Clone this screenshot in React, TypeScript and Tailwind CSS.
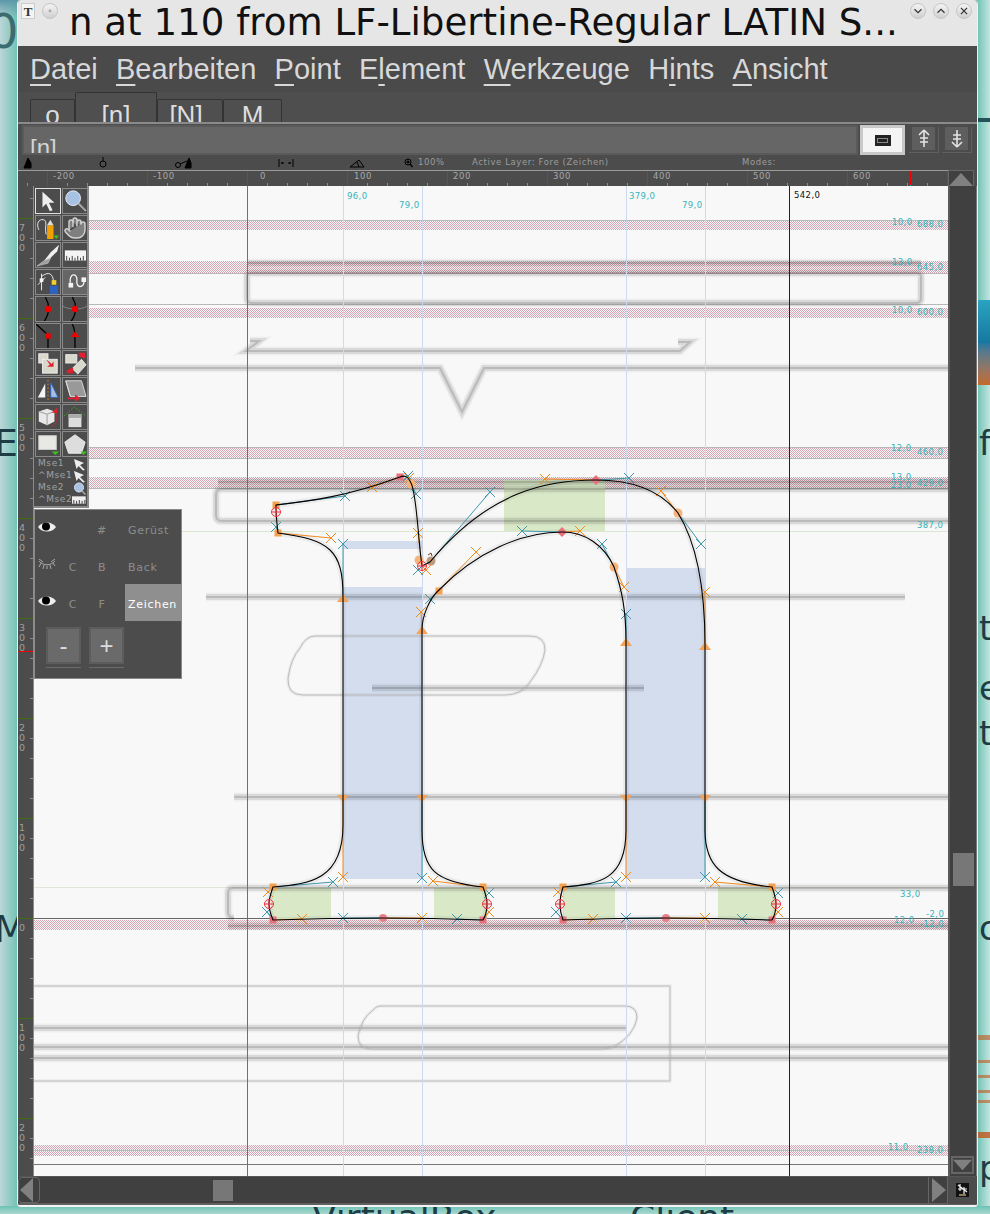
import React from "react";
import { Hand } from "lucide-react";

const MONO = "[font-family:'DejaVu_Sans',sans-serif]";
const ORANGE = "#f08a1d";
const TEAL = "#3f97ab";

function Ghost({ d }: { d: string }) {
  return (
    <g fill="none">
      <path d={d} stroke="#000" strokeOpacity="0.035" strokeWidth="9" />
      <path d={d} stroke="#000" strokeOpacity="0.09" strokeWidth="6" />
      <path d={d} stroke="#000" strokeOpacity="0.14" strokeWidth="2" />
    </g>
  );
}

const ghosts = [
  "M247 263H921",
  "M251 273H917Q921 273 921 277V298Q921 303 916 303H252Q247 303 247 298V277Q247 273 251 273Z",
  "M250 341H259L246 351H680L690 342H678",
  "M135 368H440L462 412L484 368H948",
  "M218 482H948",
  "M948 489H222Q216 489 216 495V515Q216 521 222 521H948",
  "M206 597H905",
  "M372 688H644",
  "M234 797H948",
  "M948 888H233Q228 888 228 893V912Q228 918 234 918",
  "M228 926H948",
  "M34 1028H626",
  "M34 1047H948",
  "M34 1058H948",
];

const thin = [
  "M315 636H530Q545 636 545 650Q543 665 530 682Q522 695 505 695H303Q287 695 288 678Q291 658 300 648Q306 636 315 636Z",
  "M34 986H670V1081H34",
  "M380 1006H625Q637 1006 637 1018Q634 1035 615 1046Q610 1049 600 1049H372Q358 1049 358 1036Q362 1018 372 1011Q376 1006 380 1006Z",
];

const handles: [number, number, number, number, string][] = [
  [400, 477, 372, 487, ORANGE], [411, 484, 409, 478, ORANGE], [278, 533, 331, 538, ORANGE], [422, 566, 418, 533, ORANGE],
  [439, 590, 476, 552, ORANGE], [422, 630, 421, 612, ORANGE], [596, 480, 545, 479, ORANGE], [562, 532, 580, 531, ORANGE],
  [678, 513, 661, 491, ORANGE], [614, 567, 624, 587, ORANGE], [705, 645, 705, 592, ORANGE], [343, 797, 343, 877, ORANGE],
  [483, 887, 433, 881, ORANGE], [273, 887, 268, 892, ORANGE], [273, 920, 302, 919, ORANGE], [383, 918, 422, 918, ORANGE],
  [483, 920, 489, 912, ORANGE], [563, 887, 558, 892, ORANGE], [563, 920, 593, 919, ORANGE], [626, 797, 626, 877, ORANGE],
  [772, 887, 715, 882, ORANGE], [772, 920, 778, 912, ORANGE], [666, 918, 705, 918, ORANGE], [422, 566, 426, 570, ORANGE],
  [276, 505, 345, 496, TEAL], [278, 533, 276, 527, TEAL], [400, 477, 408, 476, TEAL], [411, 484, 416, 494, TEAL],
  [430, 562, 490, 492, TEAL], [439, 590, 430, 599, TEAL], [562, 532, 522, 531, TEAL], [614, 567, 602, 544, TEAL],
  [596, 480, 629, 478, TEAL], [678, 513, 701, 544, TEAL], [343, 597, 343, 544, TEAL], [626, 642, 626, 614, TEAL],
  [422, 797, 422, 878, TEAL], [273, 887, 333, 882, TEAL], [273, 920, 267, 912, TEAL], [383, 918, 343, 918, TEAL],
  [483, 920, 457, 919, TEAL], [483, 887, 489, 893, TEAL], [563, 920, 556, 912, TEAL], [563, 887, 616, 882, TEAL],
  [705, 797, 705, 877, TEAL], [772, 887, 778, 893, TEAL], [772, 920, 742, 919, TEAL], [666, 918, 626, 918, TEAL],
  [422, 566, 418, 570, TEAL],
];

const labels: [number, number, string, string?][] = [
  [347, 199, "96,0"], [399, 208, "79,0"], [629, 199, "379,0"], [682, 208, "79,0"], [794, 198, "542,0", "#111"],
  [892, 225, "10,0"], [917, 227, "688,0"], [892, 265, "13,0"], [917, 270, "645,0"], [892, 313, "10,0"], [917, 315, "600,0"],
  [891, 451, "12,0"], [917, 455, "460,0"], [891, 480, "13,0"], [891, 488, "23,0"], [917, 486, "429,0"], [917, 528, "387,0"],
  [900, 897, "33,0"], [926, 917, "-2,0"], [894, 923, "12,0"], [920, 927, "-12,0"], [888, 1150, "11,0"], [917, 1153, "238,0"],
];

const CONTOUR =
  "M276 505C310 501 345 497 400 477C404 475 408 476 411 483C417 495 418 540 422 566L430 562C490 490 548 480 596 480C630 480 660 490 678 513C698 545 705 590 705 645V830C705 865 720 882 772 887C775 895 776 900 776 904C776 910 775 915 772 920C742 919 705 918 666 918C626 918 593 919 563 920C561 915 560 910 560 904C560 898 561 893 563 887C600 884 626 880 626 830V642C626 610 622 590 614 567C604 545 585 532 562 532C522 532 476 552 439 590C430 598 422 615 422 630V830C422 870 435 882 483 887C486 895 487 900 487 904C487 910 486 915 483 920C457 919 422 918 383 918C343 918 302 919 273 920C271 915 269 910 269 904C269 898 271 893 273 887C310 884 343 880 343 825V597C343 550 330 540 278 533C277 525 276 515 276 505Z";

function Cross({ x, y }: { x: number; y: number }) {
  return (
    <g fill="none" stroke="#f0303c" strokeWidth="1">
      <circle cx={x} cy={y} r="4.5" />
      <path d={`M${x - 4.5} ${y}H${x + 4.5}M${x} ${y - 4.5}V${y + 4.5}`} />
    </g>
  );
}

function Canvas() {
  const sq: [number, number, string][] = [
    [276, 505, "#f5a14f"], [278, 533, "#f5a14f"], [273, 887, "#f5a14f"], [483, 887, "#f5a14f"], [563, 887, "#f5a14f"], [772, 887, "#f5a14f"], [439, 591, "#f5a14f"],
    [400, 477, "#e8707a"], [273, 920, "#e8707a"], [483, 920, "#e8707a"], [563, 920, "#e8707a"], [772, 920, "#e8707a"],
  ];
  return (
    <svg width="914" height="990" viewBox="34 186 914 990" className="block">
      <defs>
        <pattern id="hatch" width="2" height="2" patternUnits="userSpaceOnUse">
          <rect width="1" height="1" fill="#d6a4b2" />
          <rect x="1" y="1" width="1" height="1" fill="#d6a4b2" />
        </pattern>
      </defs>
      <rect x="34" y="186" width="914" height="990" fill="#f8f8f8" />
      {[[220, 10], [261, 12], [308, 10], [447, 11], [477, 12], [920, 10], [1145, 11]].map(([y, h]) => (
        <rect key={y} x="34" y={y} width="914" height={h} fill="url(#hatch)" />
      ))}
      <g fill="#b8b8b8">
        <rect x="34" y="220" width="914" height="1" />
        <rect x="34" y="273" width="914" height="1" />
        <rect x="34" y="304" width="914" height="1" />
        <rect x="34" y="447" width="914" height="1" />
        <rect x="34" y="458" width="914" height="1" />
        <rect x="34" y="488" width="914" height="1" />
        <rect x="34" y="1150" width="914" height="1" />
      </g>
      <rect x="34" y="887" width="914" height="1" fill="#dfe6dc" />
      <rect x="34" y="531" width="914" height="1" fill="#dbe8cf" />
      <rect x="34" y="1164" width="914" height="1" fill="#777" />
      <rect x="34" y="918" width="914" height="1" fill="#666" />

      <g fill="#d3ddee">
        <rect x="343" y="541" width="79" height="8" />
        <rect x="343" y="587" width="79" height="292" />
        <rect x="626" y="568" width="79" height="311" />
      </g>
      <g fill="#d9e9c8">
        <rect x="504" y="480" width="101" height="51" />
        <rect x="271" y="888" width="60" height="31" />
        <rect x="434" y="888" width="53" height="31" />
        <rect x="563" y="888" width="52" height="31" />
        <rect x="718" y="888" width="57" height="31" />
      </g>

      {ghosts.map((d) => <Ghost key={d} d={d} />)}
      {thin.map((d) => (
        <g key={d} fill="none">
          <path d={d} stroke="#000" strokeOpacity="0.05" strokeWidth="3.5" />
          <path d={d} stroke="#bcbcbc" strokeWidth="1" />
        </g>
      ))}

      <g fill="#cdd9ee">
        <rect x="343" y="186" width="1" height="990" />
        <rect x="422" y="186" width="1" height="990" />
        <rect x="626" y="186" width="1" height="990" />
        <rect x="705" y="186" width="1" height="990" />
      </g>
      <rect x="247" y="186" width="1" height="990" fill="#707070" />
      <rect x="789" y="186" width="1" height="990" fill="#222" />

      <path d={CONTOUR} fill="none" stroke="#000" strokeOpacity="0.05" strokeWidth="6" />

      {handles.map(([x1, y1, x2, y2, c], i) => (
        <g key={i} stroke={c} strokeWidth="1" fill="none">
          <path d={`M${x1} ${y1}L${x2} ${y2}`} />
          <path d={`M${x2 - 5} ${y2 - 5}L${x2 + 5} ${y2 + 5}M${x2 - 5} ${y2 + 5}L${x2 + 5} ${y2 - 5}`} />
        </g>
      ))}

      {sq.map(([x, y, c], i) => <rect key={i} x={x - 3.5} y={y - 3.5} width="7" height="7" fill={c} />)}
      {[[343, 599], [422, 631], [626, 643], [705, 647]].map(([x, y]) => (
        <path key={x} d={`M${x - 6} ${y + 3}L${x} ${y - 5}L${x + 6} ${y + 3}Z`} fill="#f3a35c" />
      ))}
      {[343, 422, 626, 705].map((x) => (
        <path key={x} d={`M${x - 6} 795L${x} 802L${x + 6} 795Z`} fill="#f3a35c" />
      ))}
      {[[411, 484], [678, 513], [614, 567], [419, 560]].map(([x, y]) => (
        <circle key={x} cx={x} cy={y} r="4.5" fill="#f5b47c" />
      ))}
      <circle cx="431" cy="561" r="4.5" fill="#bf9a7c" />
      <path d="M428 555L431 553L432 556" stroke="#6b3d1a" strokeWidth="1" fill="none" />
      {[[596, 480], [562, 532]].map(([x, y]) => (
        <path key={x} d={`M${x} ${y - 5}L${x + 5} ${y}L${x} ${y + 5}L${x - 5} ${y}Z`} fill="#e8707a" />
      ))}
      {[[383, 918], [666, 918]].map(([x, y]) => <circle key={x} cx={x} cy={y} r="4" fill="#e8808a" />)}

      <path d={CONTOUR} fill="none" stroke="#000" strokeWidth="1.1" />
      {[[276, 512], [422, 566], [269, 904], [487, 904], [560, 904], [776, 904]].map(([x, y]) => <Cross key={x} x={x} y={y} />)}

      {labels.map(([x, y, t, c], i) => (
        <text key={i} x={x} y={y} fontFamily="DejaVu Sans" fontSize="8.5" letterSpacing="0.4" fill={c ?? "#35b4ba"}>{t}</text>
      ))}
    </svg>
  );
}

function TopRuler() {
  const ticks = Array.from({ length: 48 }, (_, i) => 27 + i * 20);
  const majors = [47, 147, 247, 347, 447, 547, 647, 747, 847, 947];
  const text: [number, string][] = [[53, "-200"], [153, "-100"], [260, "0"], [354, "100"], [453, "200"], [553, "300"], [653, "400"], [753, "500"], [853, "600"]];
  return (
    <svg width="930" height="16" viewBox="18 170 930 16" className="block">
      <rect x="18" y="170" width="930" height="1" fill="#9a9a9a" />
      {ticks.map((x) => <rect key={x} x={x} y="183" width="1" height="3" fill="#8a8a8a" />)}
      {majors.map((x) => <rect key={x} x={x} y="171" width="1" height="15" fill="#3d6d14" />)}
      <rect x="910" y="171" width="1" height="15" fill="#f00000" />
      <rect x="910" y="185" width="1" height="1" fill="#30c0c0" />
      {text.map(([x, t]) => (
        <text key={t} x={x} y="179" fontFamily="DejaVu Sans" fontSize="8.5" letterSpacing="0.6" fill="#a8a8a8">{t}</text>
      ))}
    </svg>
  );
}

function LeftRuler() {
  const ticks = Array.from({ length: 50 }, (_, i) => 198 + i * 20);
  const majors = [218, 318, 418, 518, 618, 718, 818, 918, 1018, 1118];
  const text: [number, string][] = [[218, "700"], [318, "600"], [418, "500"], [518, "400"], [618, "300"], [718, "200"], [818, "100"], [918, "0"], [1018, "100"], [1118, "200"]];
  return (
    <svg width="16" height="990" viewBox="18 186 16 990" className="block">
      {ticks.map((y) => <rect key={y} x="30" y={y} width="3" height="1" fill="#8a8a8a" />)}
      {majors.map((y) => <rect key={y} x="18" y={y} width="15" height="1" fill="#3d6d14" />)}
      <rect x="18" y="651" width="15" height="1" fill="#f00000" />
      {text.map(([y, t]) => (
        <text key={y} fontFamily="DejaVu Sans" fontSize="9.5" fill="#a0a0a0">
          {t.split("").map((c, i) => <tspan key={i} x="19" y={y + 13 + i * 10}>{c}</tspan>)}
        </text>
      ))}
      <rect x="33" y="186" width="1" height="990" fill="#8c8c8c" />
    </svg>
  );
}

const W = "#f4f4f4";
const toolIcons: React.ReactNode[] = [
  <path d="M7 3L7 20L11 16L15 24L18 23L14 15L20 15Z" fill="#eee" />,
  <g><circle cx="11" cy="10" r="8" fill="#a8c2e4" stroke="#e8eef8" /><path d="M17 16L25 24" stroke="#aaa" strokeWidth="2" /></g>,
  <g><path d="M3 15C0 8 3 3 8 4C13 5 9 12 11 20" stroke={W} fill="none" /><path d="M12 10H19V25H12Z" fill="#f0a000" /><path d="M12 10L15.5 4L19 10Z" fill="#ddd" /><path d="M19 21L25 21L22 25Z" fill="#40c020" /></g>,
  <foreignObject width="26" height="26"><Hand size={26} color="#d4d4d4" fill="#7f7f7f" strokeWidth={1.4} /></foreignObject>,
  <g><path d="M25 2L16 10L9 19L14 18L23 9Z" fill="#f0f0f0" /><path d="M9 19L1 25L13 22L16 16Z" fill="#a0a0a0" stroke="#ddd" strokeWidth="0.5" /></g>,
  <g><rect x="2" y="8" width="23" height="11" fill={W} /><path d="M4 19V14M7 19V16M10 19V14M13 19V16M16 19V14M19 19V16M22 19V14" stroke="#333" /></g>,
  <g><path d="M2 16L10 8M6 4L6 22" stroke={W} /><rect x="4" y="9" width="4" height="4" fill={W} /><path d="M6 7C14 1 18 4 19 12" stroke={W} fill="none" /><rect x="15" y="17" width="9" height="9" fill="#2e62c0" /><rect x="17" y="11" width="5" height="5" fill="#f0d030" /></g>,
  <g><rect x="6" y="14" width="5" height="5" fill={W} /><path d="M8 14C6 3 16 3 15 11C14 20 22 20 23 12" stroke={W} strokeWidth="1.4" fill="none" /><rect x="20" y="8" width="5" height="5" fill={W} /></g>,
  <g><path d="M10 0C15 8 15 18 9 26" stroke="#000" strokeWidth="1.4" fill="none" /><circle cx="13" cy="13" r="3.5" fill="#f00000" /></g>,
  <g><path d="M10 0C15 8 15 18 9 26" stroke="#000" strokeWidth="1.4" fill="none" /><path d="M0 10C6 14 20 14 26 10" stroke="#888" fill="none" /><circle cx="13" cy="13" r="3.5" fill="#f00000" /></g>,
  <g><path d="M0 0L13 12V26" stroke="#000" strokeWidth="1.4" fill="none" /><rect x="10" y="10" width="6" height="6" fill="#f00000" /></g>,
  <g><path d="M10 0C13 5 13 10 13 26" stroke="#000" strokeWidth="1.4" fill="none" /><path d="M8 14L13 8L18 14Z" fill="#f00000" /></g>,
  <g><rect x="3" y="3" width="10" height="10" fill="#d8d8cc" stroke="#eee" /><rect x="7" y="9" width="16" height="15" fill="#d8d8cc" stroke="#eee" /><path d="M11 9L17 14L19 11V17H12L15 15Z" fill="#e02030" /></g>,
  <g><rect x="3" y="4" width="12" height="9" fill="#d8d8cc" stroke="#eee" /><path d="M10 19L20 9L25 15L16 25Z" fill="#d8d8cc" stroke="#eee" /><path d="M17 2H24V8L21 7L17 6Z" fill="#e02030" /><path d="M4 24H11V18L8 19L4 21Z" fill="#e02030" /></g>,
  <g><path d="M2 21L10 6V21Z" fill={W} /><path d="M16 5L24 21H16Z" fill="#a8c0e0" stroke="#2e62c0" /><path d="M13 2V25" stroke="#e08020" strokeDasharray="2 2" /></g>,
  <g><path d="M3 3H20L25 20H8Z" fill="#999" stroke="#ddd" /><path d="M3 3L8 20" stroke="#ddd" /><path d="M5 21H13V18L19 22L13 26V23H5Z" fill="#e02030" /></g>,
  <g><path d="M3 7L12 4L20 7V18L12 22L3 18Z" fill="#e8e8e8" /><path d="M12 10V22M3 7L12 10L20 7" stroke="#999" fill="none" /><path d="M21 8C25 14 22 22 16 23" stroke="#e02030" strokeDasharray="2 1" fill="none" /><path d="M17 8L23 3V9Z" fill="#e02030" /></g>,
  <g><path d="M1 12L12 2L25 12" stroke="#4a9a20" strokeDasharray="2 1.5" fill="none" /><rect x="6" y="10" width="14" height="14" fill="#ddd" /><rect x="6" y="10" width="14" height="4" fill="#aaa" /></g>,
  <g><rect x="3" y="4" width="19" height="15" fill="#e8e8e4" stroke="#ccc" /><path d="M17 21H25L21 25Z" fill="#40c020" /></g>,
  <g><path d="M13 3L24 11L20 23H6L2 11Z" fill="#ddd" stroke="#eee" /><path d="M19 21H26L22 25Z" fill="#40c020" /></g>,
];

function Tool({ i, on }: { i: number; on?: boolean }) {
  return (
    <div className={`h-[26px] w-[26px] border ${i === 7 ? "border-[#8a8a8a] bg-[#666]" : on ? "border-[#e0e0e0] bg-[#4c4c4c]" : "border-[#8a8a8a] bg-[#4c4c4c]"}`}>
      <svg width="24" height="24" viewBox="0 0 26 26" className="block overflow-hidden">{toolIcons[i]}</svg>
    </div>
  );
}

function MiniPointer() {
  return <svg width="13" height="13" viewBox="0 0 13 13"><path d="M1 1L11 5L7 7L12 12L10 12.5L5.5 8L3.5 11Z" fill="#eee" /></svg>;
}

function MouseRow({ label, children }: { label: string; children: React.ReactNode }) {
  return (
    <div className={`flex h-[12px] items-center justify-between pl-[3px] pr-[1px] text-[9px] tracking-[0.6px] text-[#a0a0a0] ${MONO}`}>
      <span>{label}</span>
      {children}
    </div>
  );
}

function ToolPalette() {
  return (
    <div className="absolute left-0 top-0 w-[55px] border-r-2 border-b-2 border-[#8a8a8a] bg-[#4c4c4c] pl-[1px] pt-[2px]">
      <div className="grid grid-cols-2 gap-x-px gap-y-px">
        {toolIcons.map((_, i) => <Tool key={i} i={i} on={i === 0} />)}
      </div>
      <div className="pt-[1px]">
        <MouseRow label="Mse1"><MiniPointer /></MouseRow>
        <MouseRow label="^Mse1"><MiniPointer /></MouseRow>
        <MouseRow label="Mse2">
          <svg width="13" height="13" viewBox="0 0 13 13"><circle cx="6" cy="5.5" r="4.5" fill="#a8c2e4" stroke="#dde" /><path d="M9 9L12.5 12.5" stroke="#aaa" strokeWidth="1.5" /></svg>
        </MouseRow>
        <MouseRow label="^Mse2">
          <svg width="15" height="8" viewBox="0 0 15 8"><rect width="15" height="8" fill="#eee" /><path d="M2 8V4M5 8V5M8 8V4M11 8V5M14 8V4" stroke="#333" /></svg>
        </MouseRow>
      </div>
    </div>
  );
}

function Eye({ open }: { open: boolean }) {
  if (open) {
    return (
      <svg width="18" height="12" viewBox="0 0 18 12">
        <path d="M0 6C4 0 14 0 18 6C14 12 4 12 0 6Z" fill="#eee" />
        <circle cx="8" cy="5.5" r="4" fill="#000" />
      </svg>
    );
  }
  return (
    <svg width="18" height="12" viewBox="0 0 18 12" fill="none" stroke="#aaa" strokeWidth="1">
      <path d="M1 3C5 8 13 8 17 3" />
      <path d="M3 5L1 9M6 7L5 11M9 8V11M12 7L13 11M15 5L17 8M1 1L5 4M17 1L13 4" />
    </svg>
  );
}

function LayerRow({ open, a, b, name, active }: { open: boolean; a: string; b: string; name: string; active?: boolean }) {
  return (
    <div className={`grid h-[37px] grid-cols-[23px_30px_37px_57px] items-center text-[11px] tracking-[0.7px] text-[#8c8c8c] ${MONO}`}>
      <div className="-mt-[3px] flex justify-center"><Eye open={open} /></div>
      <span className="pt-[5px] text-center">{a}</span>
      <span className="pr-[9px] pt-[5px] text-center">{b}</span>
      <span className={`flex h-full items-center pl-[3px] pt-[5px] ${active ? "bg-[#8f8f8f] text-white" : ""}`}>{name}</span>
    </div>
  );
}

function LayerPalette() {
  return (
    <div className="absolute left-0 top-[323px] h-[170px] w-[148px] border border-[#8a8a8a] bg-[#4c4c4c]">
      <LayerRow open a="" b="#" name="Gerüst" />
      <LayerRow open={false} a="C" b="B" name="Back" />
      <LayerRow open a="C" b="F" name="Zeichen" active />
      <div className="flex gap-2 pl-[11px] pt-[6px]">
        {["-", "+"].map((t) => (
          <div key={t} className="border-b border-[#6a6a6a] pb-[3px]">
            <div className="flex h-[37px] w-[35px] items-center justify-center border-2 border-[#5c5c5c] bg-[#6a6a6a] text-[24px] font-light leading-none text-[#dcdcdc] [font-family:'Liberation_Sans',sans-serif]">{t}</div>
          </div>
        ))}
      </div>
    </div>
  );
}

function Round({ kind }: { kind: "down" | "up" | "x" | "dot" }) {
  const p = kind === "down" ? "M4 6L8 10L12 6" : kind === "up" ? "M4 10L8 6L12 10" : kind === "x" ? "M4.5 4.5L11.5 11.5M11.5 4.5L4.5 11.5" : "";
  return (
    <div className="flex h-[16px] w-[16px] items-center justify-center rounded-full border border-[#c4c4c4] bg-gradient-to-b from-[#f4f4f4] to-[#d0d0d0]">
      <svg width="14" height="14" viewBox="0 0 16 16" fill="none" stroke="#333" strokeWidth="1.4">
        {p ? <path d={p} /> : <circle cx="8" cy="8" r="1" fill="#aaa" stroke="#aaa" />}
      </svg>
    </div>
  );
}

function Tab({ w, label, active, shift }: { w: string; label: string; active?: boolean; shift?: boolean }) {
  return (
    <div className={`${w} ${active ? "h-[30px] pt-[7px]" : "h-[23px] pt-0"} ${shift ? "pr-[8px]" : ""} overflow-hidden rounded-t-[2px] border border-b-0 border-[#333] bg-[#4f4f4f] text-center text-[26px] leading-[30px] text-[#dedede]`}>
      {label}
    </div>
  );
}

function ModeBtn({ up }: { up: boolean }) {
  return (
    <div className="h-[26px] w-[30px] border-b border-r border-[#606060] px-[3px] pb-[2px]">
      <div className="flex h-full items-center justify-center bg-[#5e5e5e]">
        <svg width="14" height="19" viewBox="0 0 14 19" fill="none" stroke="#e4e4e4" strokeWidth="1.6">
          {up ? <path d="M7 1L2 6M7 1L12 6M7 1V18M3 9H11M3 13H11" /> : <path d="M7 18L2 13M7 18L12 13M7 18V1M3 6H11M3 10H11" />}
        </svg>
      </div>
    </div>
  );
}

function InfoRow() {
  const ic = "fill-black stroke-black";
  return (
    <div className={`flex h-[15px] items-center bg-[#4c4c4c] text-[8.5px] tracking-[0.6px] text-[#9c9c9c] ${MONO}`}>
      <div className="w-[81px] pl-[5px]">
        <svg width="10" height="12" viewBox="0 0 10 12"><path d="M1 11L5 1L8 6V11Z" className={ic} /></svg>
      </div>
      <div className="w-[76px]">
        <svg width="8" height="12" viewBox="0 0 8 12" fill="none" stroke="#000"><circle cx="4" cy="7" r="3" /><path d="M4 0V4" /></svg>
      </div>
      <div className="w-[103px]">
        <svg width="17" height="12" viewBox="0 0 17 12" fill="none" stroke="#000"><circle cx="3" cy="8" r="2.5" /><path d="M5 7L12 4" /><path d="M10 11L14 1L16 6V11Z" className={ic} /></svg>
      </div>
      <div className="w-[71px]">
        <svg width="16" height="10" viewBox="0 0 16 10" fill="none" stroke="#000"><path d="M1 1V9M15 1V9M3 5H6M10 5H13M4 4V6M12 4V6" /></svg>
      </div>
      <div className="w-[55px]">
        <svg width="16" height="10" viewBox="0 0 16 10" fill="none" stroke="#000"><path d="M1 9H15L10 2L1 9M8 4L10 9" /></svg>
      </div>
      <div className="flex w-[68px] items-center gap-[5px]">
        <svg width="9" height="10" viewBox="0 0 9 10" fill="none" stroke="#000"><circle cx="4" cy="4" r="3" /><path d="M2.5 4H5.5M4 2.5V5.5M6 6L8.5 9" strokeWidth="1.3" /></svg>
        <span>100%</span>
      </div>
      <span className="w-[270px]">Active Layer: Fore (Zeichen)</span>
      <span>Modes:</span>
    </div>
  );
}

const DT = "text-[#1e3c44]";

export default function App() {
  return (
    <div className="relative h-[1214px] w-[990px] overflow-hidden bg-gradient-to-r from-[#c4dcdc] to-[#c8e6e0]">
      {/* desktop behind the window */}
      <div className="absolute left-0 top-0 h-full w-[20px] bg-gradient-to-r from-[#bcd6d8] to-[#62bfb0]" />
      <div className="absolute right-0 top-0 h-full w-[14px] bg-gradient-to-r from-[#62bfb0] to-[#c4e6e0]" />
      <div className="absolute bottom-0 left-0 h-[8px] w-full bg-gradient-to-b from-[#6cc2b4] to-[#a8d8d0]" />
      <div className="absolute left-0 top-0 h-[18px] w-[18px] bg-gradient-to-b from-[#5b97a8] to-transparent" />
      <div className="absolute right-0 top-[118px] h-[4px] w-[12px] bg-[#24525a]" />
      <div className="absolute right-0 top-[300px] h-[85px] w-[12px] bg-gradient-to-b from-[#2aa4c0] via-[#1678a0] to-[#c46a28]" />
      <div className="absolute right-0 top-[1035px] h-[5px] w-[12px] bg-[#c0561c] opacity-60" />
      <div className="absolute right-0 top-[1060px] h-[3px] w-[12px] bg-[#c0561c] opacity-60" />
      <div className="absolute right-0 top-[1075px] h-[3px] w-[12px] bg-[#c0561c] opacity-60" />
      <div className="absolute right-0 top-[1090px] h-[3px] w-[12px] bg-[#c0561c] opacity-60" />
      <div className="absolute right-0 top-[1100px] h-[3px] w-[12px] bg-[#c0561c] opacity-60" />
      <div className="absolute right-0 top-[1132px] h-[6px] w-[12px] bg-[#c0561c] opacity-80" />
      <div className={`absolute -left-[12px] top-[7px] text-[48px] leading-[48px] text-[#3c6c70] ${MONO}`}>0</div>
      <div className={`absolute -left-[6px] top-[420px] text-[38px] leading-[46px] ${DT} ${MONO}`}>E</div>
      <div className={`absolute -left-[6px] top-[906px] text-[38px] leading-[46px] ${DT} ${MONO}`}>M</div>
      <div className={`absolute left-[979px] top-[420px] text-[34px] leading-[46px] ${DT} ${MONO}`}>fo</div>
      <div className={`absolute left-[979px] top-[605px] text-[34px] leading-[46px] ${DT} ${MONO}`}>t</div>
      <div className={`absolute left-[979px] top-[665px] text-[34px] leading-[46px] ${DT} ${MONO}`}>e</div>
      <div className={`absolute left-[979px] top-[710px] text-[34px] leading-[46px] ${DT} ${MONO}`}>t</div>
      <div className={`absolute left-[979px] top-[905px] text-[34px] leading-[46px] ${DT} ${MONO}`}>o</div>
      <div className={`absolute left-[979px] top-[1145px] text-[34px] leading-[46px] ${DT} ${MONO}`}>p</div>
      <div className={`absolute left-[312px] top-[1195px] text-[36px] leading-[46px] ${DT} ${MONO}`}>VirtualBox</div>
      <div className={`absolute left-[630px] top-[1195px] text-[36px] leading-[46px] ${DT} ${MONO}`}>Client</div>

      {/* window */}
      <div className="absolute left-[17px] top-0 flex h-[1207px] w-[961px] flex-col overflow-hidden rounded-sm border-x border-b-2 border-x-[#f0f0f0] border-b-[#f4f4f4] bg-[#4c4c4c] [font-family:'Liberation_Sans',sans-serif]">
        {/* title bar */}
        <div className="flex h-[46px] shrink-0 items-start bg-[#e6e6e6] pl-[3px] pr-[5px] pt-[3px]">
          <div className="flex h-[16px] w-[16px] items-center justify-center border border-[#ccc] bg-[#f4f4f0] text-[13px] font-bold leading-none text-[#333] [font-family:'Liberation_Serif',serif]">T</div>
          <div className="ml-[7px]"><Round kind="dot" /></div>
          <div className={`ml-[11px] w-[828px] whitespace-nowrap text-[37.15px] leading-[40px] text-[#111] ${MONO}`}>n at 110 from LF-Libertine-Regular LATIN S...</div>
          <div className="ml-[13px] flex gap-[7px]">
            <Round kind="down" />
            <Round kind="up" />
            <Round kind="x" />
          </div>
        </div>

        {/* menu */}
        <div className="flex h-[46px] shrink-0 items-center gap-[18.3px] bg-[#4a4a4a] pl-[12px] pt-[2px] text-[29px] text-[#d8d8d8]">
          <span><u className="decoration-2 underline-offset-[5px]">D</u>atei</span>
          <span><u className="decoration-2 underline-offset-[5px]">B</u>earbeiten</span>
          <span><u className="decoration-2 underline-offset-[5px]">P</u>oint</span>
          <span>E<u className="decoration-2 underline-offset-[5px]">l</u>ement</span>
          <span><u className="decoration-2 underline-offset-[5px]">W</u>erkzeuge</span>
          <span>H<u className="decoration-2 underline-offset-[5px]">i</u>nts</span>
          <span><u className="decoration-2 underline-offset-[5px]">A</u>nsicht</span>
        </div>

        {/* tabs */}
        <div className="flex h-[32px] shrink-0 items-end overflow-hidden border-b-2 border-[#8a8a8a] bg-[#4e4e4e] pl-[12px]">
          <Tab w="w-[45px]" label="o" />
          <Tab w="w-[82px]" label="[n]" active />
          <Tab w="w-[66px]" label="[N]" shift />
          <Tab w="w-[59px]" label="M" />
        </div>

        {/* glyph name bar */}
        <div className="flex h-[31px] shrink-0 items-end gap-[2px] bg-[#4c4c4c] pl-[4px]">
          <div className="h-[30px] w-[836px] overflow-hidden border-2 border-[#5a5a5a] bg-[#666] pl-[6px] pt-[7px] text-[24px] leading-[28px] text-[#d4d4d4]">[n]</div>
          <div className="flex h-[30px] w-[45px] items-center justify-center border-[3px] border-[#c8c8c8] bg-[#f4f4f4]">
            <div className="flex h-[11px] w-[16px] items-center justify-center bg-[#222]"><div className="h-[5px] w-[11px] border border-[#888]" /></div>
          </div>
          <div className="ml-[2px] flex gap-[3px] pb-[2px]">
            <ModeBtn up />
            <ModeBtn up={false} />
          </div>
        </div>

        <InfoRow />

        {/* top ruler + scroll up */}
        <div className="flex min-h-0 flex-1 flex-col">
          <div className="flex h-[16px] shrink-0 bg-[#4c4c4c]">
            <TopRuler />
            <div className="flex h-[18px] w-[26px] items-center justify-center border border-[#666] bg-[#404040]">
              <svg width="24" height="14" viewBox="0 0 24 14"><path d="M0 14L12 1L24 14Z" fill="#808080" /></svg>
            </div>
          </div>

          <div className="flex h-[990px] shrink-0">
            <LeftRuler />
            <div className="relative h-[990px] w-[914px] overflow-hidden">
              <Canvas />
              <ToolPalette />
              <LayerPalette />
            </div>
            <div className="flex w-[29px] flex-col border-l-2 border-r border-l-[#5a5a5a] border-r-[#777] bg-[#404040] pr-[2px]">
              <div className="mt-[4px] h-[663px] shrink-0" />
              <div className="ml-[3px] h-[33px] w-[21px] shrink-0 bg-[#777]" />
              <div className="flex-1" />
              <div className="ml-[1px] mb-[2px] flex h-[18px] items-center justify-center border-2 border-[#666] bg-[#404040]">
                <svg width="22" height="12" viewBox="0 0 22 12"><path d="M0 0L11 12L22 0Z" fill="#808080" /></svg>
              </div>
            </div>
          </div>

          {/* bottom scrollbar */}
          <div className="flex h-[29px] shrink-0 items-center border-t border-[#555] border-b-2 border-b-[#606060] bg-[#404040]">
            <div className="flex h-[26px] w-[22px] items-center justify-start rounded-sm border border-[#666]">
              <svg width="14" height="24" viewBox="0 0 14 24"><path d="M14 0L1 12L14 24Z" fill="#808080" /></svg>
            </div>
            <div className="ml-[173px] h-[21px] w-[20px] bg-[#777]" />
            <div className="flex-1" />
            <div className="flex h-[26px] w-[20px] items-center justify-end border-x border-[#666]">
              <svg width="15" height="24" viewBox="0 0 15 24"><path d="M0 0L14 12L0 24Z" fill="#808080" /></svg>
            </div>
            <div className="flex h-[27px] w-[29px] items-center justify-center bg-[#4c4c4c]">
              <svg width="13" height="14" viewBox="0 0 13 14">
                <rect width="13" height="14" fill="#111" />
                <path d="M2 2L11 9M4 1V8M8 4V11M2 6H11" stroke="#eee" strokeWidth="1.2" />
                <rect x="3" y="11" width="7" height="2" fill="#8a7a60" />
              </svg>
            </div>
          </div>
        </div>
      </div>
    </div>
  );
}
